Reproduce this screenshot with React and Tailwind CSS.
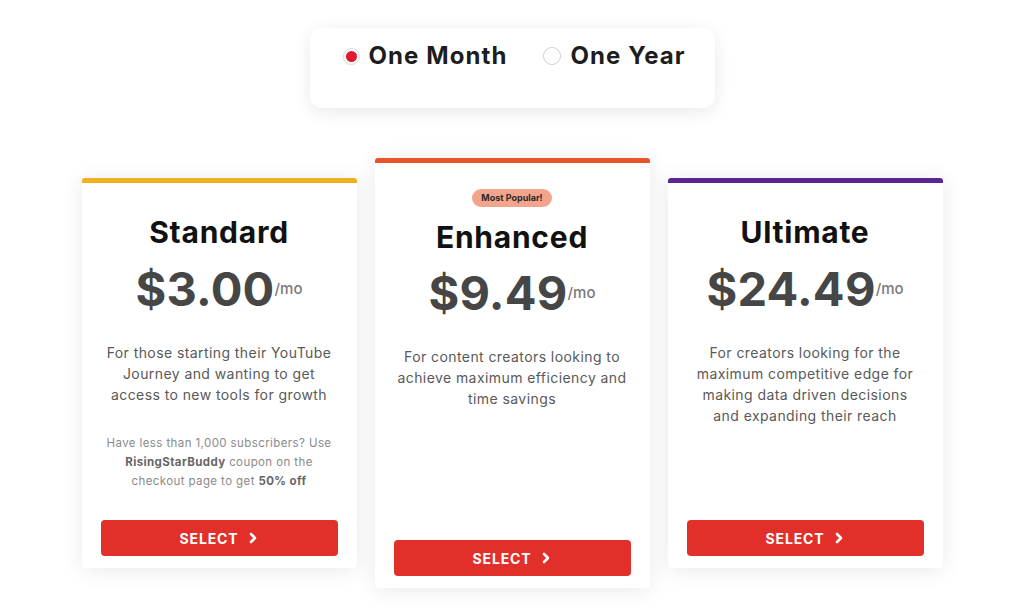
import React from "react";

const font = { fontFamily: "Inter, 'Noto Sans', sans-serif" };

function Chevron() {
  return (
    <svg width="10" height="12" viewBox="0 0 10 12" className="ml-[10px]">
      <path d="M3 2 L7 6 L3 10" fill="none" stroke="white" strokeWidth="2.6" strokeLinecap="round" strokeLinejoin="round" />
    </svg>
  );
}

function SelectButton() {
  return (
    <button className="flex h-9 w-full items-center justify-center rounded-[4px] bg-[#e22f2a] text-[14px] font-bold tracking-[0.06em] text-white">
      SELECT
      <Chevron />
    </button>
  );
}

function Price({ value }) {
  return (
    <div className="flex items-start justify-center text-[#464646]">
      <span className="text-[47px] font-bold leading-[56px] tracking-[0.005em]">{value}</span>
      <span className="mt-[17px] text-[15px] font-medium text-[#7a7a7a]">/mo</span>
    </div>
  );
}

function Card({ color, title, price, children, popular }) {
  return (
    <div
      className={`flex w-[275px] flex-col rounded-[4px] bg-white px-[19px] pb-3 shadow-[0_2px_22px_rgba(0,0,0,0.09)] ${
        popular ? "h-[430px]" : "h-[390px]"
      }`}
    >
      <div className={`-mx-[19px] h-[5px] rounded-t-[3px] ${color}`} />
      {popular ? (
        <div className="mt-[26px] flex justify-center">
          <span className="flex h-[18px] w-[80px] items-center justify-center rounded-full bg-[#f2a48c] text-[9px] font-bold text-[#2a2a2a]">
            Most Popular!
          </span>
        </div>
      ) : null}
      <h2
        className={`${popular ? "mt-[12px]" : "mt-[31px]"} text-center text-[30px] font-bold leading-[36px] tracking-[0.025em] text-[#111]`}
      >
        {title}
      </h2>
      <div className={popular ? "mt-[10px]" : "mt-[11px]"}>
        <Price value={price} />
      </div>
      <div className={`${popular ? "mt-[25px]" : "mt-[25px]"} flex-1 text-center`}>{children}</div>
      <SelectButton />
    </div>
  );
}

function Radio({ checked }) {
  return checked ? (
    <span className="flex h-[17px] w-[17px] items-center justify-center rounded-full border border-[#d8d8d8] bg-white">
      <span className="h-[11px] w-[11px] rounded-full bg-[#e3192f]" />
    </span>
  ) : (
    <span className="h-[18px] w-[18px] rounded-full border border-[#cfcfcf] bg-white" />
  );
}

const descCls = "text-[14px] leading-[21px] tracking-[0.03em] text-[#595959]";

export default function App() {
  return (
    <div className="min-h-[610px] w-[1024px] bg-white" style={font}>
      <div className="flex justify-center pt-[28px]">
        <div className="flex h-[80px] w-[405px] items-start rounded-[12px] bg-white pl-[33px] pt-[14px] shadow-[0_4px_18px_rgba(0,0,0,0.09)]">
          <div className="flex items-center">
            <Radio checked />
            <span className="ml-[9px] text-[24px] font-bold leading-[28px] tracking-[0.045em] text-[#1d1d1d]">One Month</span>
          </div>
          <div className="ml-[36px] flex items-center">
            <Radio />
            <span className="ml-[9px] text-[24px] font-bold leading-[28px] tracking-[0.045em] text-[#1d1d1d]">One Year</span>
          </div>
        </div>
      </div>

      <div className="mt-[50px] flex items-center justify-center gap-[18px]">
        <Card color="bg-[#f2b01e]" title="Standard" price="$3.00">
          <p className={descCls}>
            For those starting their YouTube
            <br />
            Journey and wanting to get
            <br />
            access to new tools for growth
          </p>
          <p className="mt-[29px] text-[11.5px] leading-[19px] tracking-[0.035em] text-[#8a8a8a]">
            Have less than 1,000 subscribers? Use
            <br />
            <b className="font-bold text-[#666]">RisingStarBuddy</b> coupon on the
            <br />
            checkout page to get <b className="font-bold text-[#666]">50% off</b>
          </p>
        </Card>
        <Card color="bg-[#e8552a]" title="Enhanced" price="$9.49" popular>
          <p className={descCls}>
            For content creators looking to
            <br />
            achieve maximum efficiency and
            <br />
            time savings
          </p>
        </Card>
        <Card color="bg-[#5a2595]" title="Ultimate" price="$24.49">
          <p className={descCls}>
            For creators looking for the
            <br />
            maximum competitive edge for
            <br />
            making data driven decisions
            <br />
            and expanding their reach
          </p>
        </Card>
      </div>
    </div>
  );
}
